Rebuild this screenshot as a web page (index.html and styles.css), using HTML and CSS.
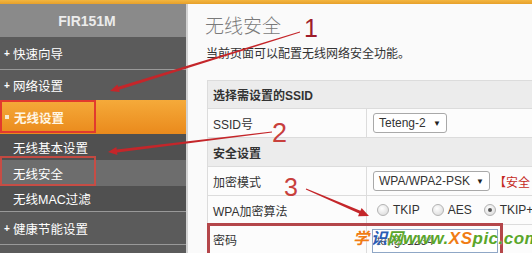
FILE: index.html
```html
<!DOCTYPE html>
<html lang="zh">
<head>
<meta charset="utf-8">
<title>无线安全</title>
<link rel="stylesheet" href="styles.css">
</head>
<body>
<div class="topbar"></div>
<div class="layout">
  <nav class="sidebar">
    <div class="brand">FIR151M</div>
    <div class="item top h32 sep"><span class="bul">+</span>快速向导</div>
    <div class="item top h30"><span class="bul">+</span>网络设置</div>
    <div class="item active"><span class="sq"></span>无线设置</div>
    <div class="item sub h26">无线基本设置</div>
    <div class="item sub h26 current">无线安全</div>
    <div class="item sub h26 sep">无线MAC过滤</div>
    <div class="item top h32 sep"><span class="bul">+</span>健康节能设置</div>
    <div class="item top h32"></div>
  </nav>
  <main class="main">
    <h1 class="title">无线安全</h1>
    <p class="desc">当前页面可以配置无线网络安全功能。</p>
    <table class="form">
      <colgroup><col class="c1"><col class="c2"></colgroup>
      <tr class="head r28"><td colspan="2">选择需设置的SSID</td></tr>
      <tr class="r29"><td class="lbl">SSID号</td><td class="val"><span class="select s1">Teteng-2<span class="caret">▼</span></span></td></tr>
      <tr class="head r29"><td colspan="2">安全设置</td></tr>
      <tr class="r29"><td class="lbl">加密模式</td><td class="val"><span class="select s2">WPA/WPA2-PSK<span class="caret">▼</span></span><span class="warn">【安全</span></td></tr>
      <tr class="r29"><td class="lbl">WPA加密算法</td><td class="val radios"><span class="radio"></span><span class="rl">TKIP</span><span class="radio"></span><span class="rl">AES</span><span class="radio on"></span><span class="rl">TKIP+AES</span></td></tr>
      <tr class="r29"><td class="lbl">密码</td><td class="val"><span class="input">teng01234</span></td></tr>
    </table>
  </main>
</div>

<div class="mark box1"></div>
<div class="mark box2"></div>
<div class="mark box3"></div>

<svg class="arrows" width="532" height="253" viewBox="0 0 532 253" xmlns="http://www.w3.org/2000/svg">
  <polygon fill="#c4262a" points="299.9,31.6 118.15,86.87 117.4,84.5 110,91 119.8,92.1 119.05,89.73 300.1,32.4"/>
  <polygon fill="#c4262a" points="271.94,131.5 116.7,149.4 116.4,146.9 108,152 117.4,154.9 117.1,152.4 272.06,132.5"/>
  <polygon fill="#c4262a" points="306.2,188.54 360.4,210.7 361.6,208.0 369,216 358.0,216.2 359.2,213.5 305.8,189.46"/>
  <text x="304" y="37" class="num n1">1</text>
  <text x="272" y="142" class="num n2">2</text>
  <text x="284" y="196" class="num n3">3</text>
</svg>

<div class="watermark"><span class="wo">学</span><span class="wb">识</span><span class="wg">网</span><span class="wg url">www.</span><span class="wo url">XS</span><span class="wg url">pic.com</span></div>
</body>
</html>
```

FILE: styles.css
```css
* { box-sizing: border-box; margin: 0; padding: 0; }
html, body { width: 532px; height: 253px; overflow: hidden; }
body {
  font-family: "Liberation Sans", "Noto Sans CJK SC", sans-serif;
  font-size: 12px;
  color: #333;
  background: #fafafa;
  position: relative;
}
.topbar { height: 4px; background: linear-gradient(#f3b640, #e7a02a); }
.layout { display: flex; height: 249px; }

.sidebar {
  width: 188px;
  flex: none;
  background: #5b5b5b;
  border-right: 2px solid #d2d2d2;
  color: #fff;
}
.brand {
  height: 33px;
  background: #8a8a8a;
  color: #ececec;
  font-weight: bold;
  font-size: 14px;
  display: flex;
  align-items: center;
  justify-content: center;
  padding-right: 12px;
}
.item {
  display: flex;
  align-items: center;
  padding-left: 4px;
  font-size: 12.5px;
  color: #fff;
}
.item.sep { border-bottom: 1px solid #999; }
.h32 { height: 33px; }
.h30 { height: 30px; }
.h26 { height: 26px; }
.bul { width: 9px; font-size: 10px; font-weight: bold; }
.sq { width: 4px; height: 4px; background: #f7ead0; margin: 0 5px 0 1px; }
.item.active {
  height: 34px;
  background: linear-gradient(#f5aa3a, #ea8a1c);
  font-weight: bold;
  font-size: 12.5px;
  color: #fff6e4;
}
.item.sub { padding-left: 13px; background: #505050; }
.item.sub.current { background: #6d6d6d; }

.main { flex: 1; padding: 9px 0 0 18px; overflow: hidden; }
.title {
  font-family: "Noto Sans CJK SC", sans-serif;
  font-weight: 300;
  font-size: 19px;
  line-height: 24px;
  color: #7a7a7a;
  margin-left: -1px;
}
.desc { margin-top: 8px; line-height: 18px; font-size: 12px; color: #333; }

.form {
  margin: 17px 0 0 1px;
  width: 345px;
  table-layout: fixed;
  border-collapse: collapse;
  border: 1px solid #d4d4d4;
  background: #fcfcfc;
}
.c1 { width: 159px; }
.c2 { width: 186px; }
.form td { border: 1px solid #dcdcdc; padding: 0 0 0 5px; font-size: 12px; white-space: nowrap; overflow: hidden; }
.form .head td { background: #ececec; font-weight: bold; color: #333; }
.r28 { height: 28px; }
.r29 { height: 29px; }
.lbl { color: #333; }
.form td.val { padding-left: 6px; }

.select {
  display: inline-flex;
  align-items: center;
  justify-content: space-between;
  height: 20px;
  padding: 0 5px 0 5px;
  border: 1px solid #a9a9a9;
  border-radius: 3px;
  background: #fff;
  color: #333;
  vertical-align: middle;
}
.s1 { width: 74px; }
.s2 { width: 117px; }
.caret { font-size: 8px; color: #222; }
.warn { color: #c42a24; margin-left: 4px; vertical-align: middle; }

.radios { color: #333; }
.radio {
  display: inline-block;
  width: 12px;
  height: 12px;
  border-radius: 50%;
  border: 1px solid #b4b4b4;
  background: radial-gradient(circle at 40% 35%, #fff, #d6d6d6);
  vertical-align: middle;
  margin-left: 4px;
  position: relative;
}
.radio.on::after {
  content: "";
  position: absolute;
  left: 3px; top: 3px;
  width: 4px; height: 4px;
  border-radius: 50%;
  background: #555;
}
.rl { margin-left: 4px; margin-right: 8px; vertical-align: middle; }

.input {
  display: inline-block;
  width: 126px;
  height: 24px;
  line-height: 22px;
  border: 1px solid #8fa7c6;
  background: #fff;
  padding-left: 4px;
  color: #333;
  vertical-align: middle;
  margin-top: 3px;
  margin-left: -1px;
}

.mark { position: absolute; pointer-events: none; }
.box1 { left: 0; top: 100px; width: 96px; height: 33px; border: 2px solid #e23a2e; }
.box2 { left: 0; top: 156px; width: 96px; height: 30px; border: 2px solid rgba(214, 72, 62, 0.85); }
.box3 { left: 207px; top: 223px; width: 296px; height: 40px; border: 3px solid #b4464a; }

.arrows { position: absolute; left: 0; top: 0; pointer-events: none; }
.num { font-family: "Liberation Sans", sans-serif; }
.n1 { font-size: 25px; fill: #9e1c2a; }
.n2 { font-size: 27px; fill: #c8403c; }
.n3 { font-size: 25px; fill: #c8403c; }

.watermark {
  position: absolute;
  left: 353px;
  top: 228px;
  font-family: "Liberation Sans", "Noto Sans CJK SC", sans-serif;
  font-weight: bold;
  font-style: italic;
  font-size: 16px;
  line-height: 22px;
  white-space: nowrap;
  text-shadow: 0 0 2px #fff;
}
.watermark .url { font-size: 17px; letter-spacing: 0.5px; }
.wo { color: #f07c14; }
.wb { color: #2a5cb4; margin-left: 2px; }
.wg { color: #5aa62a; }
```
